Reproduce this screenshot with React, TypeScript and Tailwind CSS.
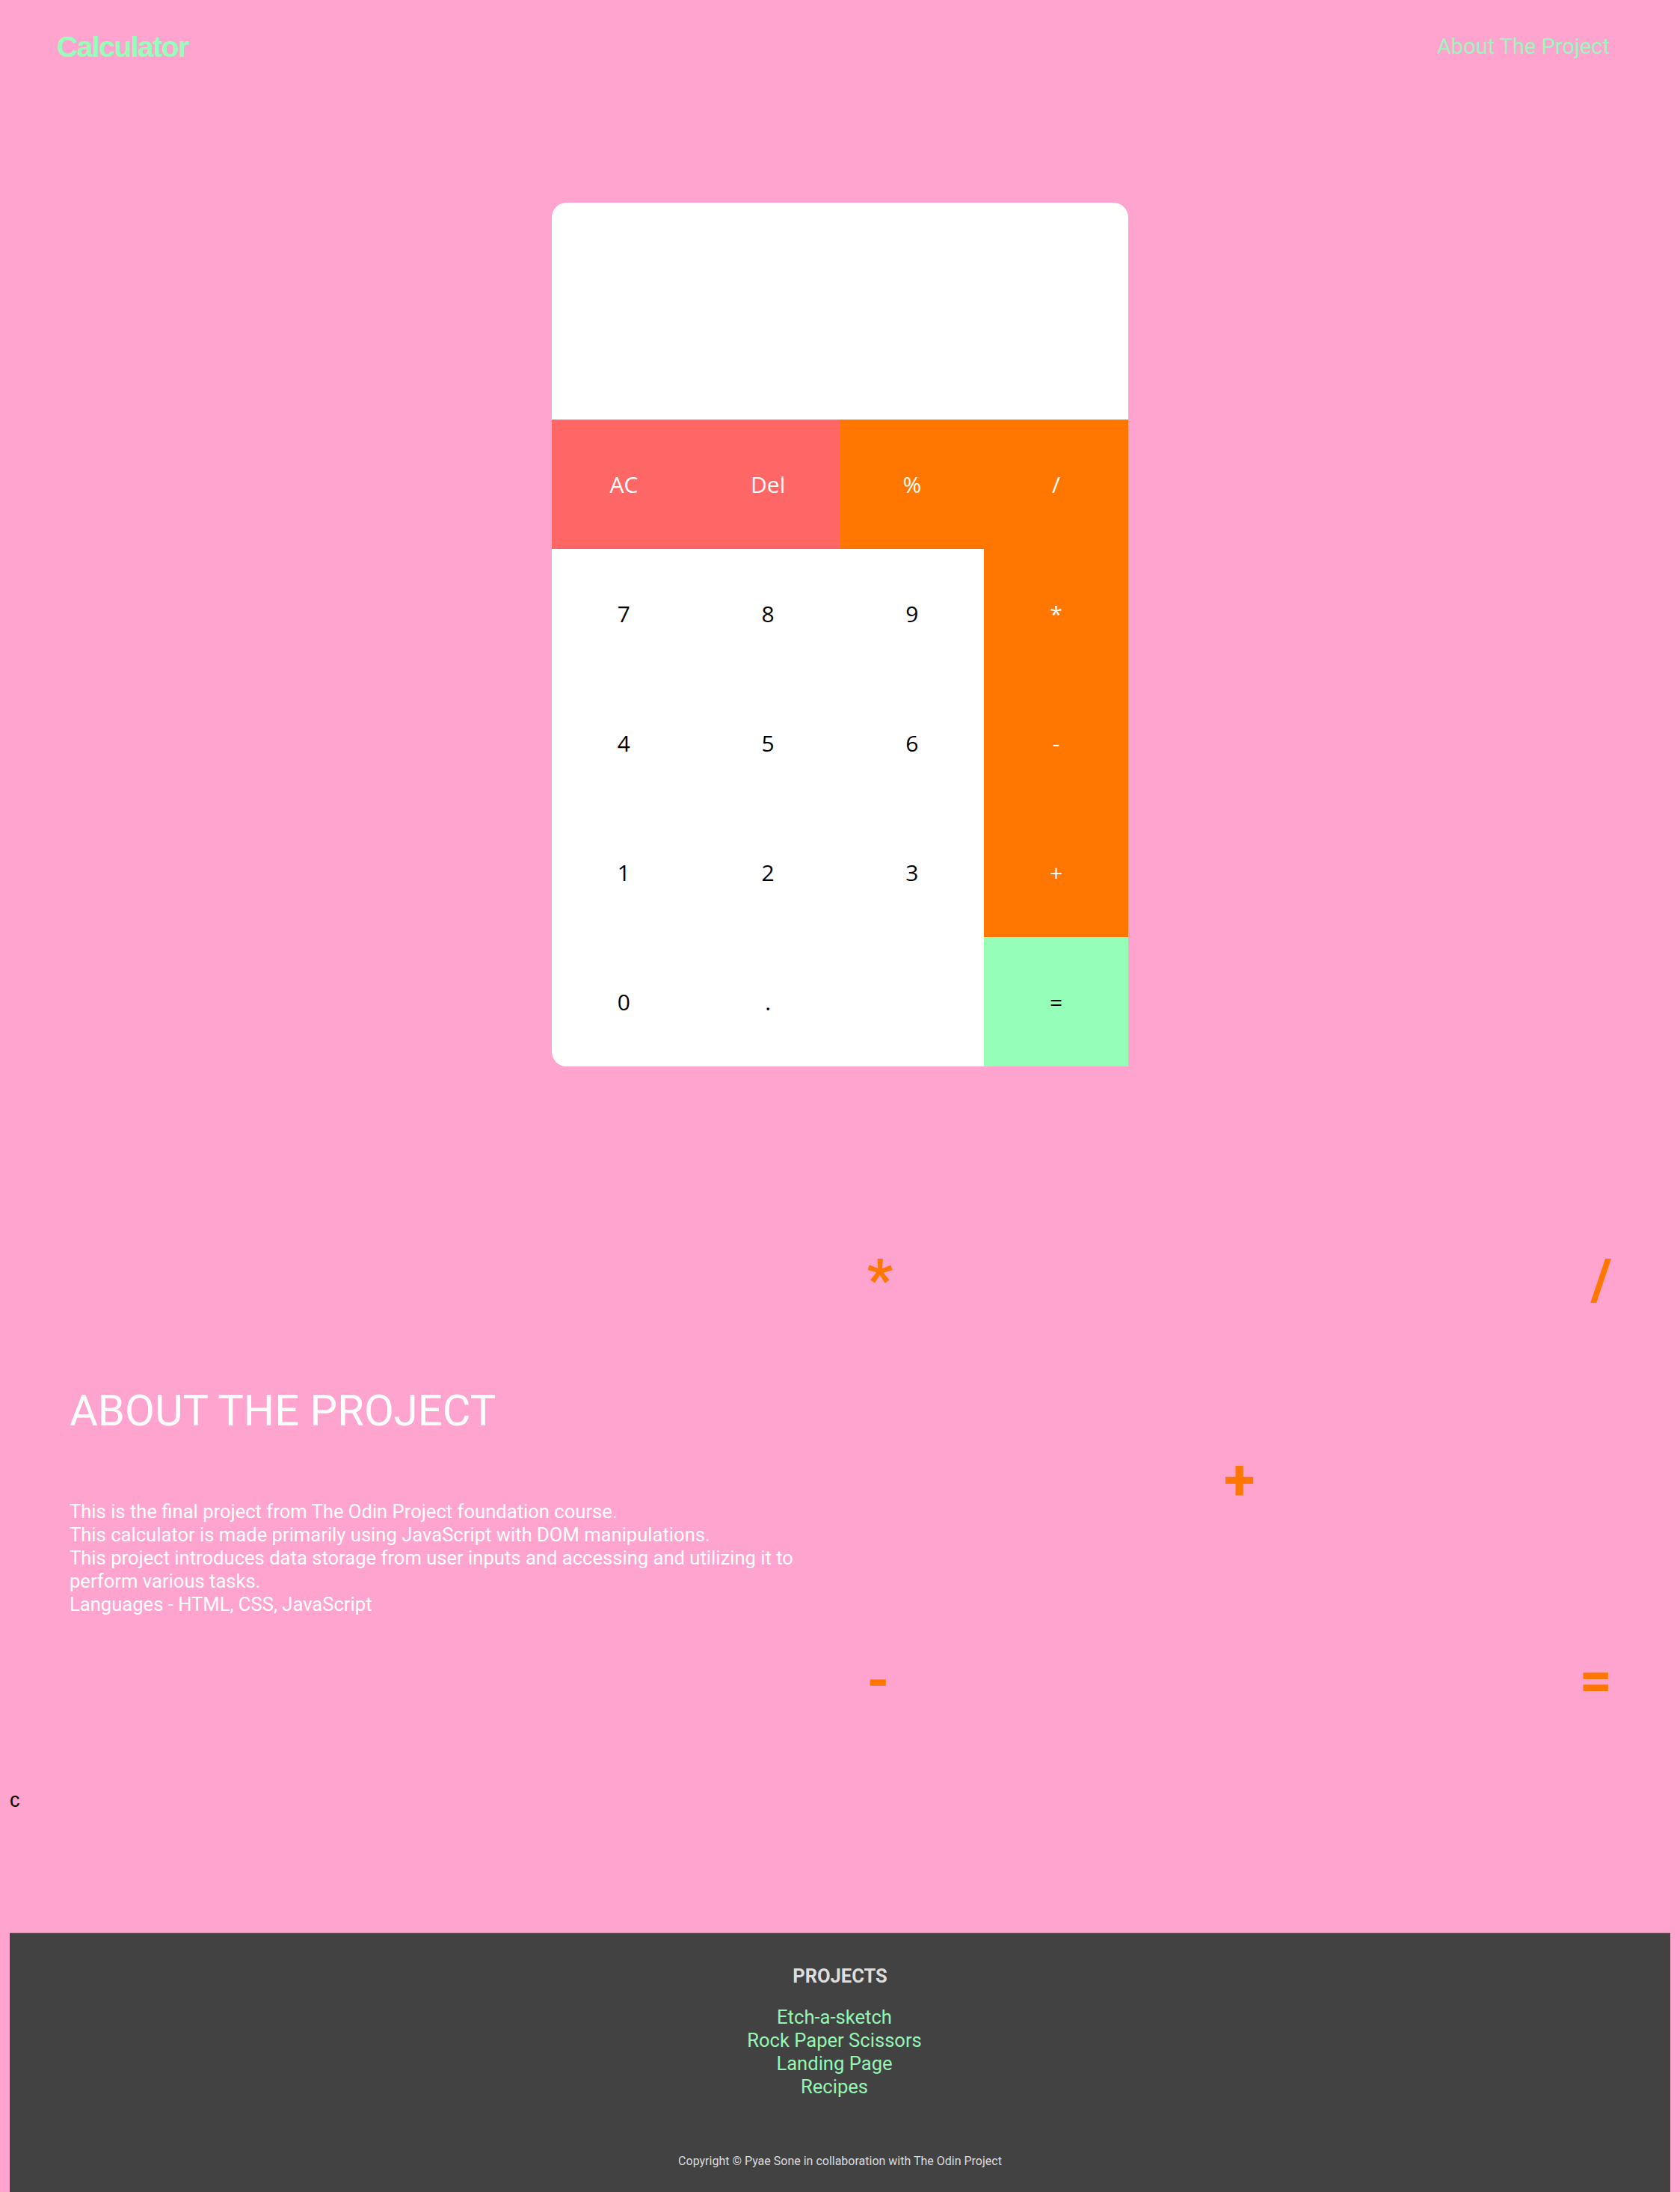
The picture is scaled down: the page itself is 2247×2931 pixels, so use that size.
const keys = [
  { label: "AC", tone: "coral" },
  { label: "Del", tone: "coral" },
  { label: "%", tone: "orange" },
  { label: "/", tone: "orange" },
  { label: "7", tone: "plain" },
  { label: "8", tone: "plain" },
  { label: "9", tone: "plain" },
  { label: "*", tone: "orange" },
  { label: "4", tone: "plain" },
  { label: "5", tone: "plain" },
  { label: "6", tone: "plain" },
  { label: "-", tone: "orange" },
  { label: "1", tone: "plain" },
  { label: "2", tone: "plain" },
  { label: "3", tone: "plain" },
  { label: "+", tone: "orange" },
  { label: "0", tone: "plain" },
  { label: ".", tone: "plain" },
  { label: "", tone: "plain" },
  { label: "=", tone: "green" },
];

const toneClass: Record<string, string> = {
  coral: "bg-[#ff6666] text-white",
  orange: "bg-[#ff7700] text-white",
  green: "bg-[#95ffb9] text-black",
  plain: "bg-transparent text-black",
};

const projects = ["Etch-a-sketch", "Rock Paper Scissors", "Landing Page", "Recipes"];

const Calculator = () => (
  <div className="mx-auto mt-[145px] w-[771px] rounded-[20px] bg-white">
    {/* display */}
    <div className="h-[290px]"></div>
    <div className="grid grid-cols-4">
      {keys.map((k, i) => (
        <button
          key={i}
          className={`flex h-[173px] items-center justify-center font-['Open_Sans',sans-serif] text-[30px] ${toneClass[k.tone]}`}
        >
          {k.label}
        </button>
      ))}
    </div>
  </div>
);

const Operators = () => (
  <div className="flex flex-col gap-[192px] pl-[36px] pr-[78px] font-['Roboto',sans-serif] text-[76px] font-bold leading-none text-[#ff7700]">
    <div className="flex justify-between">
      <span>*</span>
      <span>/</span>
    </div>
    <div className="flex justify-center">
      <span>+</span>
    </div>
    <div className="flex justify-between">
      <span>-</span>
      <span>=</span>
    </div>
  </div>
);

export default function App() {
  return (
    <div className="flex min-h-[2931px] flex-col bg-[#ffa4ce] px-[13px] font-['Roboto',sans-serif]">
      <header className="flex h-[126px] items-center justify-between pl-[63px] pr-[81px]">
        <h1 className="font-['Liberation_Sans',Arial,sans-serif] text-[39px] font-bold tracking-[-1.5px] text-[#95ffb9]">
          Calculator
        </h1>
        <a className="text-[29px] text-[#9df5bf]">About The Project</a>
      </header>

      <Calculator />

      <section className="mt-[247px] grid grid-cols-2">
        <div className="pl-[80px] pt-[184px] text-white">
          <h2 className="text-[58px] leading-none">ABOUT THE PROJECT</h2>
          <p className="mt-[91px] text-[25.6px] leading-[31px]">
            This is the final project from The Odin Project foundation course.
            <br />
            This calculator is made primarily using JavaScript with DOM manipulations.
            <br />
            This project introduces data storage from user inputs and accessing and utilizing it to perform various tasks.
            <br />
            Languages - HTML, CSS, JavaScript
          </p>
        </div>
        <Operators />
      </section>

      <div className="mt-[102px] font-['Liberation_Sans',Arial,sans-serif] text-[27px] text-black">c</div>

      <footer className="mt-[156px] flex flex-1 flex-col items-center border-t border-[#c88fa9] bg-[#424242] pb-[31px] pt-[38px]">
        <h3 className="text-[25.5px] font-bold text-[#dddddd]">PROJECTS</h3>
        <ul className="mt-[21px] flex flex-col items-center pr-[15px] text-[25.6px] leading-[31px] text-[#95f5b5]">
          {projects.map((p) => (
            <li key={p}>
              <a>{p}</a>
            </li>
          ))}
        </ul>
        <p className="mt-[72px] text-[16px] text-[#dddddd]">
          Copyright © Pyae Sone in collaboration with The Odin Project
        </p>
      </footer>
    </div>
  );
}
